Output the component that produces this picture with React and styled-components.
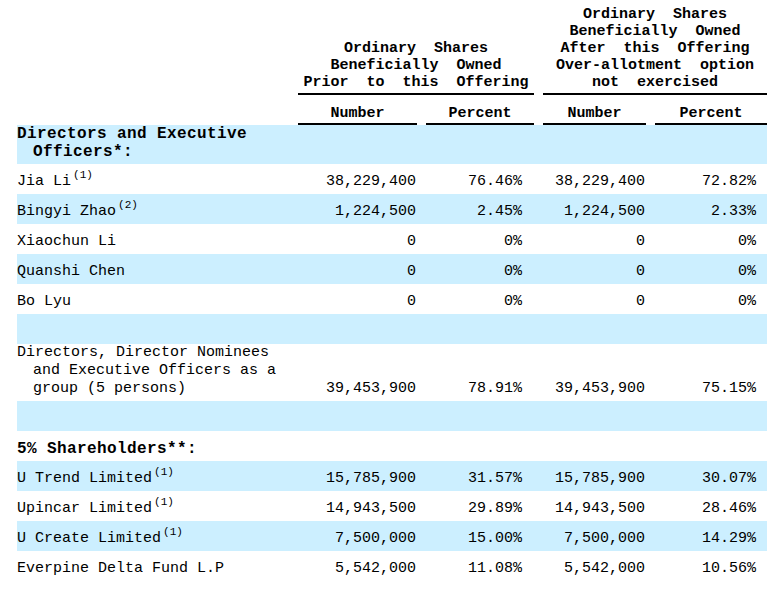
import React from "react";
import styled, { createGlobalStyle } from "styled-components";

const GlobalStyle = createGlobalStyle`
  body {
    margin: 0;
    background: #ffffff;
    color: #000000;
    font-family: "Liberation Mono", "DejaVu Sans Mono", monospace;
  }
`;

const COLS = "281px 119px 117px 112px 121px";

const Page = styled.div`
  padding: 6px 15px 0 17px;
  width: 750px;
`;

const Row = styled.div`
  display: grid;
  grid-template-columns: ${COLS};
  align-items: end;
  min-height: ${(p) => (p.$head ? "0" : "30px")};
  padding-bottom: ${(p) => (p.$head ? "0" : "3px")};
  box-sizing: border-box;
  background: ${(p) => (p.$shade ? "#ccefff" : "transparent")};
  font-size: 15px;
  line-height: 18px;
`;

const GroupCell = styled.div`
  grid-column: ${(p) => p.$span};
  padding-left: ${(p) => (p.$inset ? "9px" : "0")};
`;

const GroupTitle = styled.div`
  font-weight: bold;
  text-align: center;
  line-height: 17px;
  word-spacing: 9px;
  padding-bottom: 2px;
  border-bottom: 2px solid #000;
`;

const SubCell = styled.div`
  padding-left: ${(p) => (p.$inset ? "9px" : "0")};
`;

const SubTitle = styled.div`
  font-weight: bold;
  text-align: center;
  line-height: 17px;
  padding: 10px 0 1px;
  border-bottom: 2px solid #000;
`;

const Name = styled.div`
  padding-left: 16px;
  text-indent: -16px;
  font-weight: ${(p) => (p.$bold ? "bold" : "normal")};
  font-size: ${(p) => (p.$bold ? "16px" : "15px")};
  letter-spacing: ${(p) => (p.$bold ? "0.4px" : "0")};
`;

const Num = styled.div`
  text-align: right;
  padding-right: ${(p) => p.$pr}px;
  white-space: nowrap;
`;

const Note = styled.sup`
  font-size: 11px;
  line-height: 0;
  vertical-align: 7px;
  margin-left: 2px;
`;

const rows = [
  { section: "Directors and Executive Officers*:", shade: true },
  { name: "Jia Li", note: "1", v: ["38,229,400", "76.46%", "38,229,400", "72.82%"] },
  { name: "Bingyi Zhao", note: "2", v: ["1,224,500", "2.45%", "1,224,500", "2.33%"], shade: true },
  { name: "Xiaochun Li", v: ["0", "0%", "0", "0%"] },
  { name: "Quanshi Chen", v: ["0", "0%", "0", "0%"], shade: true },
  { name: "Bo Lyu", v: ["0", "0%", "0", "0%"] },
  { blank: true, shade: true },
  {
    name: "Directors, Director Nominees and Executive Officers as a group (5 persons)",
    v: ["39,453,900", "78.91%", "39,453,900", "75.15%"],
  },
  { blank: true, shade: true },
  { section: "5% Shareholders**:" },
  { name: "U Trend Limited", note: "1", v: ["15,785,900", "31.57%", "15,785,900", "30.07%"], shade: true },
  { name: "Upincar Limited", note: "1", v: ["14,943,500", "29.89%", "14,943,500", "28.46%"] },
  { name: "U Create Limited", note: "1", v: ["7,500,000", "15.00%", "7,500,000", "14.29%"], shade: true },
  { name: "Everpine Delta Fund L.P", v: ["5,542,000", "11.08%", "5,542,000", "10.56%"] },
];

const pads = [1, 12, 1, 11];

export default function App() {
  return (
    <>
      <GlobalStyle />
      <Page>
        <Row $head>
          <div />
          <GroupCell $span="2 / 4">
            <GroupTitle>
              Ordinary Shares
              <br />
              Beneficially Owned
              <br />
              Prior to this Offering
            </GroupTitle>
          </GroupCell>
          <GroupCell $span="4 / 6" $inset>
            <GroupTitle>
              Ordinary Shares
              <br />
              Beneficially Owned
              <br />
              After this Offering
              <br />
              Over-allotment option
              <br />
              not exercised
            </GroupTitle>
          </GroupCell>
        </Row>
        <Row $head>
          <div />
          <SubCell>
            <SubTitle>Number</SubTitle>
          </SubCell>
          <SubCell $inset>
            <SubTitle>Percent</SubTitle>
          </SubCell>
          <SubCell $inset>
            <SubTitle>Number</SubTitle>
          </SubCell>
          <SubCell $inset>
            <SubTitle>Percent</SubTitle>
          </SubCell>
        </Row>
        {rows.map((r, i) => (
          <Row key={i} $shade={r.shade}>
            {r.section ? (
              <Name $bold>{r.section}</Name>
            ) : r.blank ? (
              <div />
            ) : (
              <>
                <Name>
                  {r.name}
                  {r.note && <Note>({r.note})</Note>}
                </Name>
                {r.v.map((val, j) => (
                  <Num key={j} $pr={pads[j]}>
                    {val}
                  </Num>
                ))}
              </>
            )}
          </Row>
        ))}
      </Page>
    </>
  );
}
